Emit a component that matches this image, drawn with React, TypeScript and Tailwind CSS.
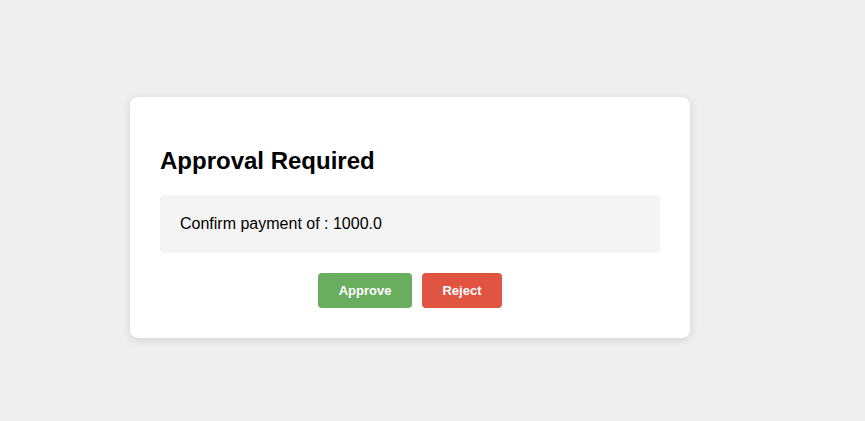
export default function App() {
  return (
    <div className="min-h-[421px] bg-[#efefef] pt-[97px] pl-[130px] font-['Liberation_Sans',Arial,sans-serif] text-black">
      <div className="w-[560px] rounded-lg bg-white p-[30px] shadow-[0_2px_10px_rgba(0,0,0,0.12)]">
        <h2 className="my-[20px] text-[24px] font-bold leading-[28px]">Approval Required</h2>
        <div className="rounded bg-[#f4f4f4] p-[20px] text-[16px] leading-[18px]">
          Confirm payment of : 1000.0
        </div>
        <div className="mt-[20px] flex justify-center gap-[10px]">
          <button className="w-[94px] rounded bg-[#69ad5f] py-[10px] text-center text-[13px] font-bold leading-[15px] text-white">
            Approve
          </button>
          <button className="w-[80px] rounded bg-[#e15441] py-[10px] text-center text-[13px] font-bold leading-[15px] text-white">
            Reject
          </button>
        </div>
      </div>
    </div>
  );
}
